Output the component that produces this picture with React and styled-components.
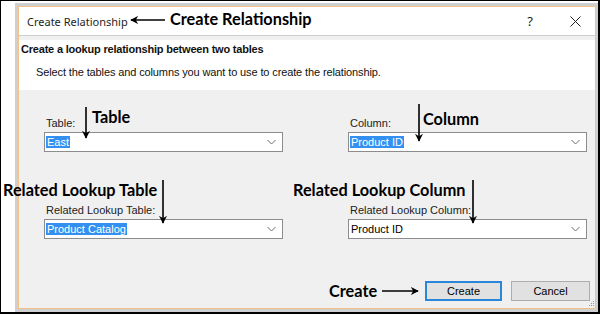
import React from 'react'
import styled, { createGlobalStyle } from 'styled-components'

const GlobalStyle = createGlobalStyle`
  * { box-sizing: border-box; }
  body {
    margin: 0;
    background: #fff;
    font-family: "Liberation Sans", Arial, sans-serif;
  }
`

const Page = styled.div`
  position: relative;
  width: 600px;
  height: 315px;
  overflow: hidden;
`

const Frame = styled.div`
  width: 600px;
  height: 314px;
  border-left: 1px solid #000;
  border-top: 1px solid #000;
  border-right: 2px solid #000;
  border-bottom: 2px solid #000;
  background: #fff;
  padding: 2px 0 0 14px;
`

const Dialog = styled.div`
  height: 309px;
  border: 3px solid #cfcfcf;
  border-right-width: 2px;
`

const Window = styled.div`
  height: 100%;
  border: 1px solid #f2c188;
  display: flex;
  flex-direction: column;
  background: #f0f0f0;
  position: relative;
`

const TitleBar = styled.div`
  height: 29px;
  flex: none;
  background: #fff;
  border-bottom: 1px solid #cdcdcd;
  display: flex;
  align-items: center;
  padding-left: 8px;
`

const TitleText = styled.span`
  font-family: "Noto Sans", "Open Sans", sans-serif;
  font-size: 11px;
  color: #1e1e1e;
  flex: 1;
`

const Controls = styled.div`
  display: flex;
  align-items: center;
  height: 100%;
`

const ControlButton = styled.div`
  width: ${p => p.$w}px;
  height: 100%;
  display: flex;
  align-items: center;
  justify-content: center;
  font-family: "Noto Sans", sans-serif;
  font-size: 13px;
  color: #222;
`

const Band = styled.div`
  height: 4px;
  flex: none;
  background: #f0f0f0;
`

const Header = styled.div`
  height: 50px;
  flex: none;
  background: #fff;
  padding: 3px 0 0 2px;
`

const Heading = styled.div`
  font-size: 11px;
  font-weight: bold;
  line-height: 13px;
  color: #111;
  letter-spacing: -0.2px;
`

const Subtitle = styled.div`
  font-size: 11px;
  line-height: 13px;
  color: #111;
  margin: 10px 0 0 15px;
  letter-spacing: -0.12px;
`

const Content = styled.div`
  flex: 1;
  padding: 27px 5px 0 25px;
  display: flex;
  flex-direction: column;
`

const FieldGrid = styled.div`
  display: grid;
  grid-template-columns: 239px 239px;
  column-gap: 65px;
  row-gap: 52px;
`

const Field = styled.div`
  display: flex;
  flex-direction: column;
`

const Label = styled.div`
  font-size: 11px;
  line-height: 13px;
  color: #222;
  padding-left: 2px;
  margin-bottom: 2px;
`

const Select = styled.div`
  height: 20px;
  background: #fff;
  border: 1px solid #8c8c8c;
  display: flex;
  align-items: center;
  padding: 0 6px 0 1px;
  font-size: 11px;
  color: #000;
`

const Value = styled.span`
  flex: 1;
  line-height: 13px;
  span {
    padding: 0 1px;
    background: ${p => (p.$selected ? '#3390f0' : 'transparent')};
    color: ${p => (p.$selected ? '#fff' : '#000')};
  }
`

const Buttons = styled.div`
  margin-top: 42px;
  display: flex;
  justify-content: flex-end;
  gap: 9px;
`

const Button = styled.div`
  width: ${p => p.$w}px;
  height: 20px;
  display: flex;
  align-items: center;
  justify-content: center;
  background: #e1e1e1;
  border: ${p => (p.$primary ? '2px solid #2a86d8' : '1px solid #adadad')};
  font-size: 11px;
  color: #000;
`

const Grip = styled.svg`
  position: absolute;
  right: 0;
  bottom: 1px;
`

const Overlay = styled.svg`
  position: absolute;
  left: 0;
  top: 0;
  pointer-events: none;
`

const Note = styled.span`
  position: absolute;
  left: ${p => p.$x}px;
  top: ${p => p.$y}px;
  font-family: Lato, "Open Sans", sans-serif;
  font-weight: bold;
  font-size: 16.3px;
  line-height: 20px;
  color: #000;
  white-space: nowrap;
`

const Chevron = () => (
  <svg width="9" height="6" viewBox="0 0 9 6">
    <path d="M0.5 1 L4.5 5 L8.5 1" fill="none" stroke="#6d6d6d" strokeWidth="1" />
  </svg>
)

const SelectBox = ({ value, selected }) => (
  <Select>
    <Value $selected={selected}><span>{value}</span></Value>
    <Chevron />
  </Select>
)

const fields = [
  { label: 'Table:', value: 'East', selected: true },
  { label: 'Column:', value: 'Product ID', selected: true },
  { label: 'Related Lookup Table:', value: 'Product Catalog', selected: true },
  { label: 'Related Lookup Column:', value: 'Product ID', selected: false },
]

const notes = [
  { text: 'Create Relationship', x: 170, y: 9 },
  { text: 'Table', x: 92, y: 107 },
  { text: 'Column', x: 423, y: 109 },
  { text: 'Related Lookup Table', x: 3, y: 180 },
  { text: 'Related Lookup Column', x: 293, y: 180 },
  { text: 'Create', x: 329, y: 281 },
]

const arrows = [
  [165, 20, 131, 20],
  [86, 107, 86, 138],
  [419, 104, 419, 141],
  [163, 180, 163, 223],
  [473, 180, 473, 223],
  [382, 291, 418, 291],
]

export default function App() {
  return (
    <Page>
      <GlobalStyle />
      <Frame>
        <Dialog>
          <Window>
            <TitleBar>
              <TitleText>Create Relationship</TitleText>
              <Controls>
                <ControlButton $w={50}>?</ControlButton>
                <ControlButton $w={40}>
                  <svg width="11" height="11" viewBox="0 0 11 11">
                    <path d="M0.5 0.5 L10.5 10.5 M10.5 0.5 L0.5 10.5" stroke="#222" strokeWidth="1" />
                  </svg>
                </ControlButton>
              </Controls>
            </TitleBar>
            <Band />
            <Header>
              <Heading>Create a lookup relationship between two tables</Heading>
              <Subtitle>Select the tables and columns you want to use to create the relationship.</Subtitle>
            </Header>
            <Content>
              <FieldGrid>
                {fields.map(f => (
                  <Field key={f.label}>
                    <Label>{f.label}</Label>
                    <SelectBox value={f.value} selected={f.selected} />
                  </Field>
                ))}
              </FieldGrid>
              <Buttons>
                <Button $w={77} $primary>Create</Button>
                <Button $w={79}>Cancel</Button>
              </Buttons>
            </Content>
            <Grip width="7" height="7" viewBox="0 0 7 7">
              {[[5, 1], [3, 3], [5, 3], [1, 5], [3, 5], [5, 5]].map(([cx, cy]) => (
                <rect key={cx + '-' + cy} x={cx} y={cy} width="1" height="1" fill="#999" />
              ))}
            </Grip>
          </Window>
        </Dialog>
      </Frame>
      <Overlay width="600" height="315" viewBox="0 0 600 315">
        <defs>
          <marker id="head" viewBox="0 0 10 10" refX="9" refY="5" markerWidth="5" markerHeight="5" orient="auto">
            <path d="M0 0 L10 5 L0 10 L3 5 Z" fill="#000" />
          </marker>
        </defs>
        {arrows.map(([x1, y1, x2, y2], i) => (
          <line key={i} x1={x1} y1={y1} x2={x2} y2={y2} stroke="#000" strokeWidth="1.6" markerEnd="url(#head)" />
        ))}
      </Overlay>
      {notes.map(n => (
        <Note key={n.text} $x={n.x} $y={n.y}>{n.text}</Note>
      ))}
    </Page>
  )
}
